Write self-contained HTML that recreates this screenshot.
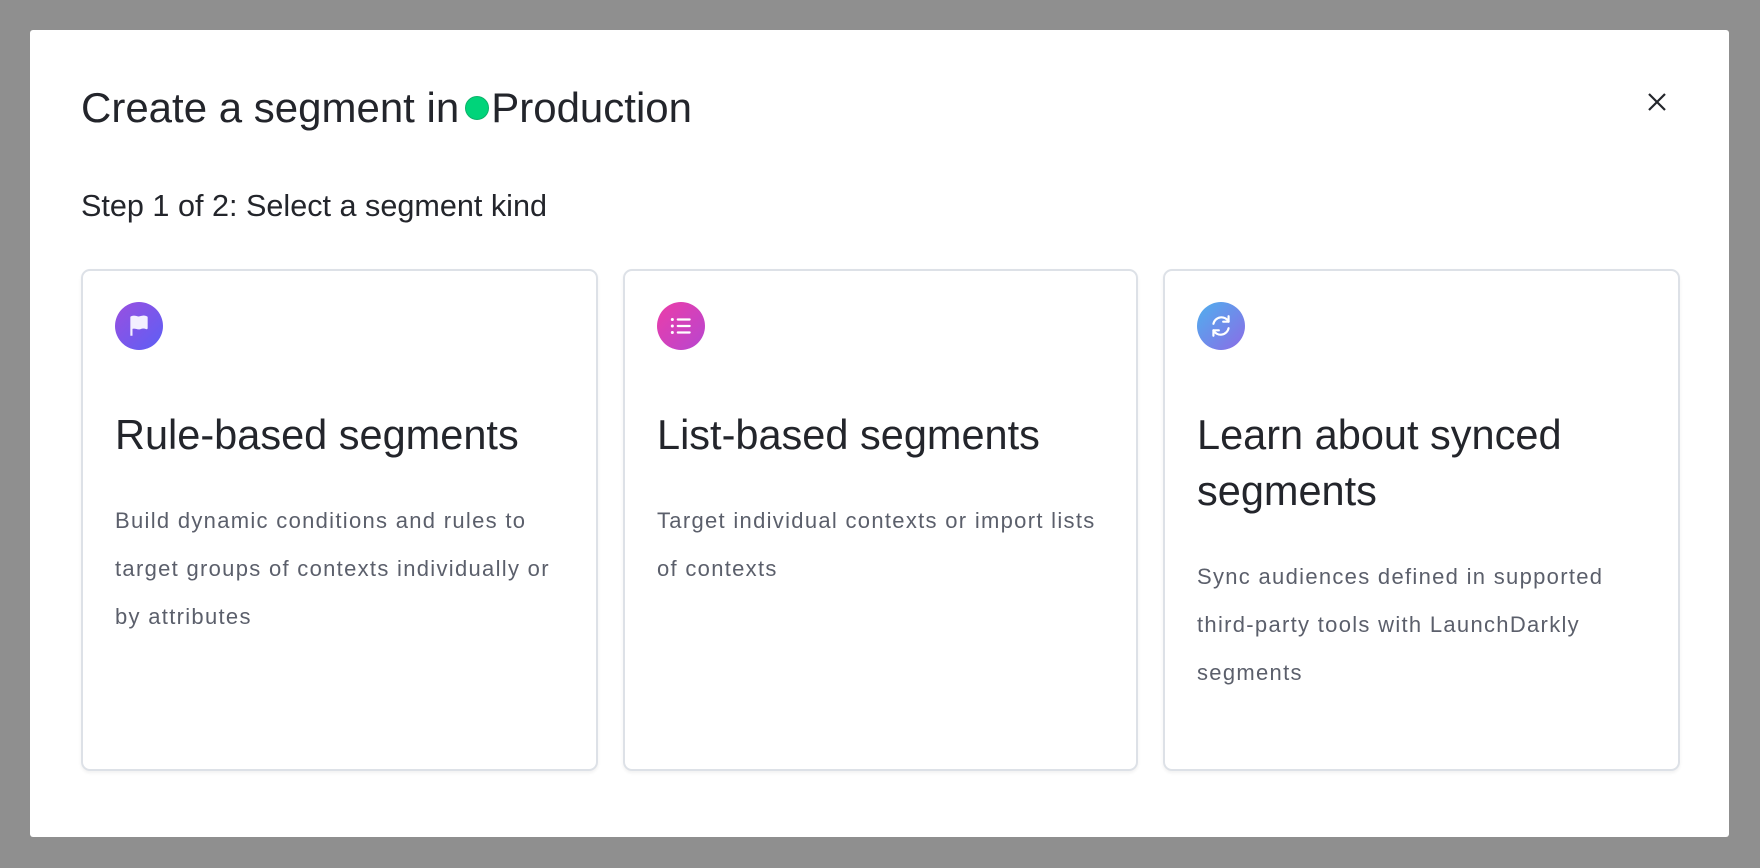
<!DOCTYPE html>
<html><head><meta charset="utf-8"><style>
*{margin:0;padding:0;box-sizing:border-box}
body{width:1760px;height:868px;background:#8f8f8f;font-family:"Liberation Sans",sans-serif;position:relative;overflow:hidden;color:#23252b}
.modal{position:absolute;left:30px;top:30px;width:1699px;height:807px;background:#fff;border-radius:3px}
h1{position:absolute;left:81px;top:80px;font-size:42px;font-weight:400;letter-spacing:0px;white-space:nowrap;line-height:56px}
.dot{display:inline-block;width:24px;height:24px;border-radius:50%;background:#00d47a;vertical-align:middle;margin:0 2px 6px 6px;border:1px solid #0bb36a}
.step{position:absolute;left:81px;top:186px;font-size:30.6px;line-height:40px;letter-spacing:0px}
.card{position:absolute;top:269px;height:502px;border:2px solid #dde1e7;border-radius:9px;box-shadow:0 2px 3px rgba(0,0,0,.06)}
.ic{position:absolute;left:32px;top:31px;width:48px;height:48px;border-radius:50%}
.ic svg{position:absolute;left:11px;top:11px}
.card h2{position:absolute;left:32px;top:136px;width:460px;font-size:41.5px;font-weight:400;line-height:56px;letter-spacing:0px}
.card p{position:absolute;left:32px;width:452px;font-size:22px;line-height:48px;color:#5b5f6b;letter-spacing:1.3px}
.x{position:absolute;left:1646px;top:91px}
</style></head><body>
<div class="modal"></div>
<h1>Create a segment in<span class="dot"></span>Production</h1>
<svg class="x" width="22" height="22" viewBox="0 0 22 22"><path d="M3 3L19 19M19 3L3 19" stroke="#23252b" stroke-width="2.2" fill="none"/></svg>
<div class="step">Step 1 of 2: Select a segment kind</div>

<div class="card" style="left:81px;width:517px">
 <div class="ic" style="background:linear-gradient(135deg,#9a4fe0,#5c5ff5)"><svg width="26" height="26" viewBox="0 0 24 24"><path d="M5 21V4c3-2 5 1 8 0s4-1 6 0v10c-2-1-4-1-6 0s-5-2-8 0" fill="#f3efff" stroke="#f3efff" stroke-width="2" stroke-linejoin="round"/></svg></div>
 <h2>Rule-based segments</h2>
 <p style="top:226px">Build dynamic conditions and rules to target groups of contexts individually or by attributes</p>
</div>
<div class="card" style="left:623px;width:515px">
 <div class="ic" style="background:linear-gradient(135deg,#ec3da8,#b746d0)"><svg width="26" height="26" viewBox="0 0 24 24"><g fill="#fff"><circle cx="4" cy="6" r="1.4"/><circle cx="4" cy="12" r="1.4"/><circle cx="4" cy="18" r="1.4"/><rect x="8" y="5" width="13" height="2" rx="1"/><rect x="8" y="11" width="13" height="2" rx="1"/><rect x="8" y="17" width="13" height="2" rx="1"/></g></svg></div>
 <h2>List-based segments</h2>
 <p style="top:226px">Target individual contexts or import lists of contexts</p>
</div>
<div class="card" style="left:1163px;width:517px">
 <div class="ic" style="background:linear-gradient(135deg,#4fb0ee,#8b6be6)"><svg width="26" height="26" viewBox="0 0 24 24" fill="none" stroke="#fff" stroke-width="2" stroke-linecap="round" stroke-linejoin="round"><path d="M5 10a7.5 7.5 0 0 1 14-2"/><path d="M19 3v5h-5"/><path d="M19 14a7.5 7.5 0 0 1-14 2"/><path d="M5 21v-5h5"/></svg></div>
 <h2>Learn about synced segments</h2>
 <p style="top:282px">Sync audiences defined in supported third-party tools with LaunchDarkly segments</p>
</div>
</body></html>
